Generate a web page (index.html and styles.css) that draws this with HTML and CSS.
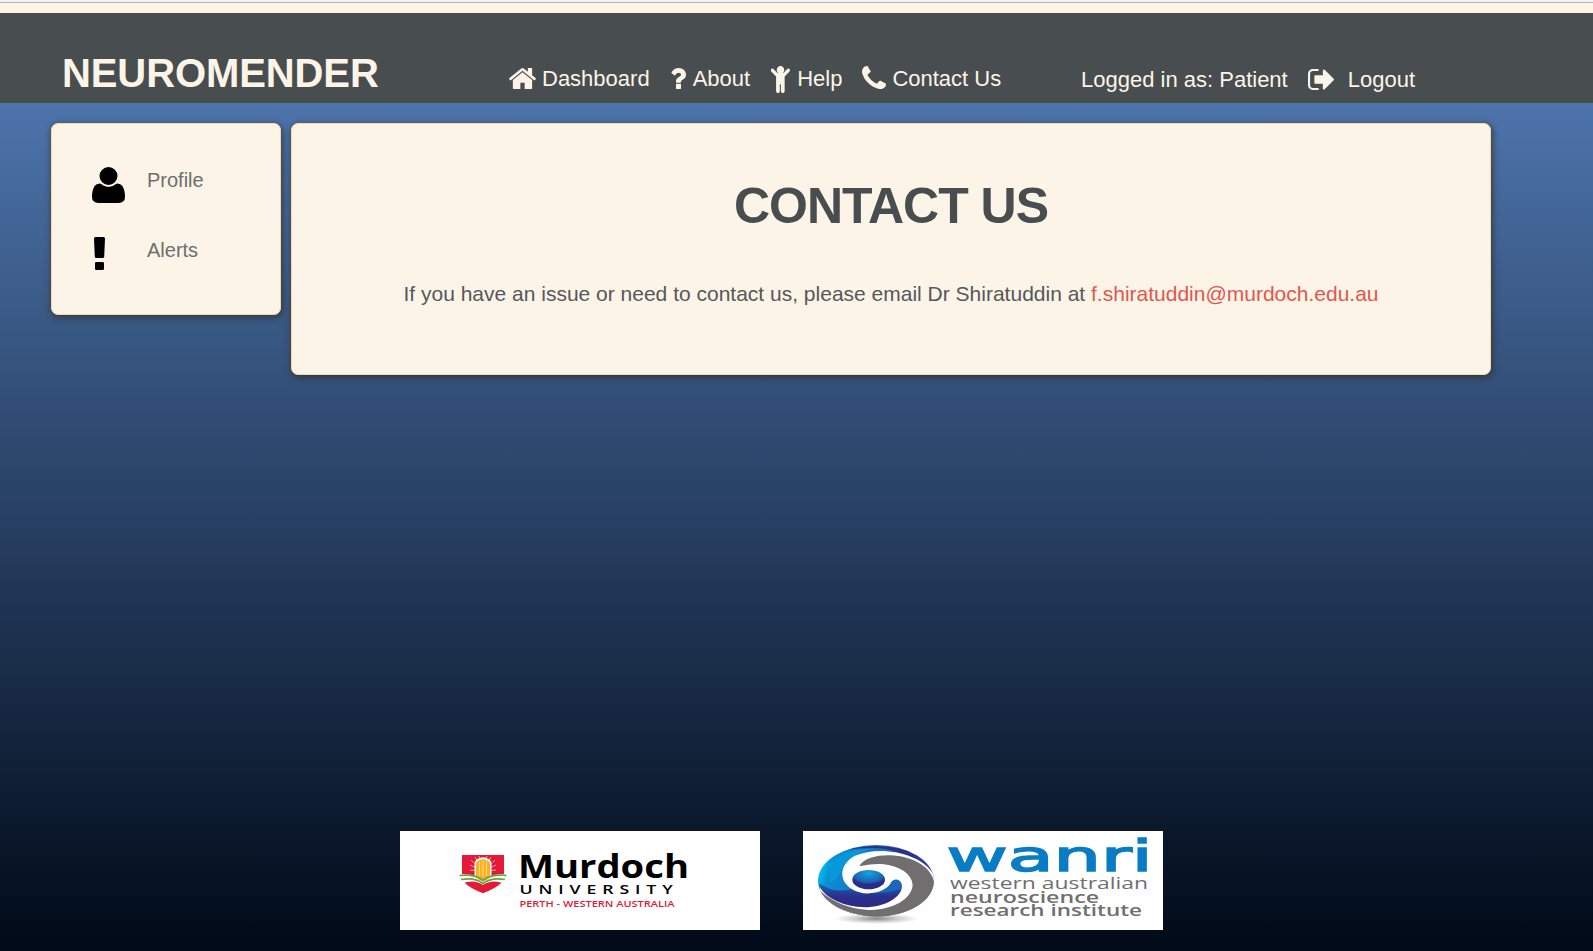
FILE: index.html
```html
<!DOCTYPE html>
<html lang="en">
<head>
<meta charset="utf-8">
<title>Neuromender - Contact Us</title>
<link rel="stylesheet" href="styles.css">
</head>
<body>
<div class="topline"></div>
<header class="header">
  <div class="brand">NEUROMENDER</div>
  <nav class="nav">
    <a class="nav-item"><svg class="i-home" viewBox="89 253 1614 1283" preserveAspectRatio="none"><path d="M1472 992v480q0 26-19 45t-45 19h-384v-384h-256v384h-384q-26 0-45-19t-19-45v-480q0-1 .5-3t.5-3l575-474 575 474q1 2 1 6zm223-69l-62 74q-8 9-21 11h-3q-13 0-21-7l-692-577-692 577q-12 8-24 7-13-2-21-11l-62-74q-8-10-7-23.5t11-21.5l719-599q32-26 76-26t76 26l244 204v-195q0-14 9-23t23-9h192q14 0 23 9t9 23v408l219 182q10 8 11 21.5t-7 23.5z"/></svg>Dashboard</a>
    <a class="nav-item"><svg class="i-question" viewBox="387 256 1017 1280" preserveAspectRatio="none"><path d="M1088 1256v240q0 16-12 28t-28 12h-240q-16 0-28-12t-12-28v-240q0-16 12-28t28-12h240q16 0 28 12t12 28zm316-600q0 54-15.5 101t-35 76.5-55 59.5-57.5 43.5-61 35.5q-41 23-68.5 65t-27.5 67q0 17-12 32.5t-28 15.5h-240q-15 0-25.5-18.5t-10.5-37.5v-45q0-83 65-156.5t143-108.5q59-27 84-56t25-76q0-42-46.5-74t-107.5-32q-65 0-108 29-35 25-107 115-13 16-31 16-12 0-25-8l-164-125q-13-10-15.5-25t5.5-28q160-266 464-266 80 0 161 31t146 83 106 127.5 41 158.5z"/></svg>About</a>
    <a class="nav-item"><svg class="i-child" viewBox="328 160 1136 1536" preserveAspectRatio="none"><path d="M1436 468l-292 292v824q0 46-33 79t-79 33-79-33-33-79v-384h-64v384q0 46-33 79t-79 33-79-33-33-79v-824l-292-292q-28-28-28-68t28-68q29-28 68.5-28t67.5 28l228 228h368l228-228q28-28 68-28t68 28q28 29 28 68.500t-28 67.500zm-316-84q0 93-65.500 158.500t-158.500 65.500-158.500-65.500-65.500-158.500 65.500-158.500 158.500-65.500 158.500 65.500 65.500 158.500z"/></svg>Help</a>
    <a class="nav-item"><svg class="i-phone" viewBox="192 128 1408 1408" preserveAspectRatio="none"><path d="M1600 1240q0 27-10 70.5t-21 68.500q-21 50-122 106-94 51-186 51-27 0-52.500-3.500t-57.500-12.500-47.500-14.500-55.500-20.500-49-18q-98-35-175-83-128-79-264.500-215.500t-215.500-264.500q-48-77-83-175-3-9-18-49t-20.500-55.500-14.500-47.500-12.500-57.500-3.500-52.500q0-92 51-186 56-101 106-122 25-11 68.500-21t70.500-10q14 0 21 3 18 6 53 76 11 19 30 54t35 63.500 31 53.500q3 4 17.500 25t21.500 35.500 7 28.500q0 20-28.500 50t-62 55-62 53-28.500 46q0 9 5 22.500t8.500 20.500 14 24 11.500 19q76 137 174 235t235 174q2 1 19 11.500t24 14 20.500 8.500 22.500 5q18 0 46-28.500t53-62 55-62 50-28.500q14 0 28.500 7t35.500 21.500 25 17.500q25 15 53.500 31t63.500 35 54 30q70 35 76 53 3 7 3 21z"/></svg>Contact Us</a>
  </nav>
  <div class="session">
    <span>Logged in as: Patient</span>
    <svg class="i-signout" viewBox="64 256 1568 1280" preserveAspectRatio="none"><path d="M704 1440q0 4 1 20t.5 26.500-3 23.500-10 19.500-20.500 6.500h-320q-119 0-203.500-84.500t-84.500-203.500v-704q0-119 84.500-203.500t203.500-84.500h320q13 0 22.500 9.500t9.500 22.500q0 4 1 20t.5 26.500-3 23.500-10 19.500-20.500 6.500h-320q-66 0-113 47t-47 113v704q0 66 47 113t113 47h312l11.500 1 11.500 3 8 5.500 7 9 2 13.500zm928-544q0 26-19 45l-544 544q-19 19-45 19t-45-19-19-45v-288h-448q-26 0-45-19t-19-45v-384q0-26 19-45t45-19h448v-288q0-26 19-45t45-19 45 19l544 544q19 19 19 45z"/></svg>
    <a>Logout</a>
  </div>
</header>
<main class="content">
  <aside class="card sidebar">
    <a class="side-item"><span class="side-icon"><svg class="i-user" viewBox="0 128 1408 1536" preserveAspectRatio="none"><path d="M1408 1405q0 120-73 189.500t-194 69.500h-874q-121 0-194-69.500t-73-189.500q0-53 3.500-103.500t14-109 26.500-108.500 43-97.500 62-81 85.500-53.500 111.500-20q9 0 42 21.500t74.500 48 108 48 133.500 21.500 133.500-21.500 108-48 74.500-48 42-21.500q61 0 111.500 20t85.500 53.500 62 81 43 97.500 26.500 108.500 14 109 3.500 103.500zm-320-893q0 159-112.500 271.500t-271.500 112.500-271.500-112.500-112.500-271.500 112.500-271.500 271.500-112.500 271.500 112.500 112.500 271.500z"/></svg></span>Profile</a>
    <a class="side-item"><span class="side-icon"><svg class="i-alert" viewBox="0 0 11 33"><path d="M1.500 0H9.500Q11 0 11 1.500L10.200 19.700Q10.100 21 8.800 21H2.200Q.9 21 .8 19.700L0 1.500Q0 0 1.500 0ZM2.300 25H8.700Q10 25 10 26.300V31.700Q10 33 8.700 33H2.300Q1 33 1 31.700V26.300Q1 25 2.300 25Z"/></svg></span>Alerts</a>
  </aside>
  <section class="card panel">
    <h1 class="title">CONTACT US</h1>
    <p class="message">If you have an issue or need to contact us, please email Dr Shiratuddin at <a class="mail">f.shiratuddin@murdoch.edu.au</a></p>
  </section>
</main>
<footer class="footer">
  <svg class="logo" viewBox="0 0 360 99">
    <path fill="#e31937" d="M62 24H104V46Q104 54 83 62.300Q62 54 62 46Z"/>
    <g stroke="#fff" stroke-width=".6"><path d="M83 40L71 29M83 40L75 26M83 40L79 25M83 40L87 25M83 40L91 26M83 40L95 29M83 40L70 34M83 40L96 34M83 40L70 39M83 40L96 39"/></g>
    <path fill="#fff" d="M59 43Q75 42 83 49Q91 42 107 43L103 52Q91 48 83 54Q75 48 63 52Z"/>
    <path fill="#fff" d="M74.500 46V33Q75 28 79 27.500Q83 25 87 27.500Q91 28 91.500 33V46L83 51Z"/>
    <path fill="#fbb220" d="M76 46V34Q76 30 79 29.500Q83 27 87 29.500Q90 30 90 34V46Q88 49 83 50Q78 49 76 46Z"/>
    <path stroke="#fff3c5" stroke-width=".6" d="M79.500 31V45M83 30V45M86.500 31V45"/>
    <g fill="none" stroke="#6aa442" stroke-width="1.700"><path d="M59.500 44.500Q75 43 83 49.500Q91 43 106.500 44.500M61 48.500Q75 46 83 52.500Q91 46 105 48.500"/></g>
    <text class="murdoch" x="118" y="47" textLength="171" lengthAdjust="spacingAndGlyphs">Murdoch</text>
    <text class="university" x="119.500" y="62.700" textLength="159" lengthAdjust="spacingAndGlyphs">UNIVERSITY</text>
    <text class="perth" x="119.500" y="76" textLength="155" lengthAdjust="spacingAndGlyphs">PERTH - WESTERN AUSTRALIA</text>
  </svg>
  <svg class="logo" viewBox="0 0 360 99">
    <defs>
      <linearGradient id="iris" x1="0" y1=".3" x2="1" y2=".5"><stop offset="0" stop-color="#00d4f8"/><stop offset=".12" stop-color="#0a8ed6"/><stop offset=".5" stop-color="#1a70bd"/><stop offset=".75" stop-color="#2a3190"/><stop offset="1" stop-color="#2259ad"/></linearGradient>
      <linearGradient id="deep" x1="0" y1="0" x2="0" y2="1"><stop offset="0" stop-color="#1c65b5"/><stop offset=".4" stop-color="#2a2f8c"/><stop offset="1" stop-color="#29297f"/></linearGradient>
      <radialGradient id="pupil" cx=".5" cy=".15" r=".8"><stop offset="0" stop-color="#13a4e3"/><stop offset=".6" stop-color="#1b62b0"/><stop offset=".75" stop-color="#2a2c86"/></radialGradient>
      <radialGradient id="ground"><stop offset="0" stop-color="#888"/><stop offset=".5" stop-color="#ccc"/><stop offset="1" stop-color="#fff"/></radialGradient>
      <clipPath id="eye"><ellipse cx="258" cy="182" rx="174" ry="107"/></clipPath>
    </defs>
    <g transform="scale(.33333) translate(-39 -33)">
      <ellipse cx="260" cy="296" rx="125" ry="16" fill="url(#ground)"/>
      <g clip-path="url(#eye)">
        <rect x="80" y="70" width="360" height="225" fill="url(#iris)"/>
        <path fill="#2a2f8c" d="M170 90Q260 65 350 92L432 165Q350 85 250 84Q200 84 170 90Z"/>
        <path fill="#0798dc" d="M120 130Q165 88 240 86Q170 110 155 150Q140 180 115 190Z"/>
        <path fill="url(#deep)" d="M88 190Q130 222 185 207Q240 232 345 207V290H88Z"/>
        <path fill="#1b66b5" d="M290 205Q310 165 330 175L338 206Q300 218 260 217Z"/>
        <path fill="#fff" d="M432 165C395 98 270 75 195 107C147 132 145 183 185 207C225 233 287 217 302 190C308 174 331 175 335 193C343 226 290 262 224 262C160 258 112 238 88 200V300H440V165Z"/>
      </g>
      <path fill="#706e6f" d="M208 139C220 114 262 105 300 106C365 108 421 138 432 184C430 245 355 290 255 290C170 286 110 252 92 214C130 248 180 267 235 270C310 270 366 236 368 194C364 160 330 140 282 133C250 130 230 136 208 139Z"/>
      <ellipse cx="236" cy="179" rx="49" ry="29" fill="url(#pupil)"/>
    </g>
    <text class="wanri" x="143.500" y="39.500" textLength="206" lengthAdjust="spacingAndGlyphs">wanri</text>
    <text class="tag" x="147" y="58" textLength="198" lengthAdjust="spacingAndGlyphs">western australian</text>
    <text class="tag strong" x="147" y="71.500" textLength="149" lengthAdjust="spacingAndGlyphs">neuroscience</text>
    <text class="tag strong" x="147" y="85" textLength="192" lengthAdjust="spacingAndGlyphs">research institute</text>
  </svg>
</footer>
</body>
</html>
```
FILE: styles.css
```css
* { box-sizing: border-box; }
body {
  margin: 0;
  height: 951px;
  overflow: hidden;
  display: flex;
  flex-direction: column;
  font-family: "Liberation Sans", Arial, sans-serif;
  background: linear-gradient(#4f78b0 90px, #4d74ab 103px, #000917 951px);
}
.topline {
  height: 13px;
  flex: none;
  background: #fdf4e8;
  border-top: 2px solid #f3f3f5;
  box-shadow: inset 0 1px #b5b3bb;
}
.header {
  height: 90px;
  flex: none;
  display: flex;
  align-items: flex-end;
  background: #484d4f;
  color: #fdf4e8;
  font-size: 22px;
  line-height: 26px;
  white-space: nowrap;
}
.header svg { fill: #fdf4e8; flex: none; }
.brand { width: 445px; margin-left: 62px; padding-bottom: 7px; font-size: 40px; line-height: 46px; font-weight: bold; letter-spacing: -.1px; }
.nav { display: flex; width: 574px; padding: 0 0 10px 2px; }
.nav-item { display: flex; align-items: flex-start; }
.i-home { width: 27px; height: 21px; margin: 2px 6px 0 0; }
.i-question { width: 16px; height: 21px; margin: 2px 7px 0 20px; }
.i-child { width: 19px; height: 27px; margin: 0 7px 0 21px; }
.i-phone { width: 24px; height: 23px; margin: 0 6px 0 20px; }
.session { display: flex; padding-bottom: 10px; }
.i-signout { width: 26px; height: 21px; margin: 2px 14px 0 20px; }
.content { display: flex; align-items: flex-start; gap: 10px; padding: 20px 0 0 51px; }
.card {
  background: #fdf4e8;
  border: 1px solid #f8d7a5;
  border-radius: 7px;
  box-shadow: 1px 2px 6px 1px rgba(50, 50, 50, .75);
}
.sidebar { width: 230px; height: 192px; padding: 42px 0 0 40px; }
.side-item { display: flex; height: 70px; font-size: 20px; line-height: 28px; color: #6b6f70; }
.side-icon { width: 55px; }
.side-icon svg { display: block; fill: #000; }
.i-user { width: 33px; height: 36px; margin-top: 1px; }
.i-alert { width: 11px; height: 33px; margin: 1px 0 0 2px; }
.panel { width: 1200px; height: 252px; text-align: center; }
.title { margin: 52px 0 0; font-size: 50px; line-height: 60px; letter-spacing: -1px; color: #484d4f; }
.message { margin: 42px 0 0; font-size: 21px; line-height: 32px; color: #55585a; white-space: nowrap; }
.mail { color: #e2574c; }
.footer { display: flex; gap: 43px; margin: auto 0 21px 400px; }
.logo { width: 360px; height: 99px; background: #fff; }
.murdoch { font: 700 31.500px "Open Sans", sans-serif; }
.university { font: 600 12px "Open Sans", sans-serif; letter-spacing: 4px; }
.perth { font: 600 8.500px "Open Sans", sans-serif; fill: #e31937; }
.wanri { font: 400 43px "DejaVu Sans", sans-serif; fill: #087cc4; stroke: #087cc4; stroke-width: 1.500px; }
.tag { font: 400 15.500px "Open Sans", sans-serif; fill: #706e6f; }
.strong { font-weight: 600; }
```
